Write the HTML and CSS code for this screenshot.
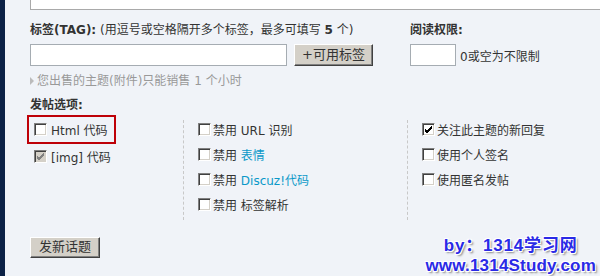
FILE: index.html
```html
<!DOCTYPE html>
<html>
<head>
<meta charset="utf-8">
<link rel="stylesheet" href="styles.css">
</head>
<body>
<div class="page">
  <div class="sidebar"></div>
  <div class="main">
    <div class="textarea"></div>
    <div class="row-top">
      <div class="tags">
        <div class="label"><b>标签(TAG):</b> (用逗号或空格隔开多个标签，最多可填写 <b>5</b> 个)</div>
        <div class="field-line">
          <span class="input input-wide"></span>
          <span class="btn btn-tags">+可用标签</span>
        </div>
      </div>
      <div class="perm">
        <div class="label"><b>阅读权限:</b></div>
        <div class="field-line">
          <span class="input input-small"></span>
          <span class="perm-note">0或空为不限制</span>
        </div>
      </div>
    </div>
    <div class="hint"><span class="tri"></span>您出售的主题(附件)只能销售 1 个小时</div>
    <div class="label opt-title"><b>发帖选项:</b></div>
    <div class="options">
      <div class="col col1">
        <div class="opt highlight"><span class="cb"></span><span class="t1">Html 代码</span></div>
        <div class="opt plain"><span class="cb cb-dis"><svg width="9" height="9" viewBox="0 0 9 9"><path d="M1 4 L3 6 L8 1 M1 5 L3 7 L8 2 M1 6 L3 8 L8 3" stroke="#808080" stroke-width="1" fill="none"/></svg></span><span class="t1">[img] 代码</span></div>
      </div>
      <div class="col col2">
        <div class="opt"><span class="cb"></span><span class="t2">禁用 URL 识别</span></div>
        <div class="opt"><span class="cb"></span><span class="t2">禁用 <a class="lnk">表情</a></span></div>
        <div class="opt"><span class="cb"></span><span class="t2">禁用 <a class="lnk">Discuz!代码</a></span></div>
        <div class="opt"><span class="cb"></span><span class="t2">禁用 标签解析</span></div>
      </div>
      <div class="col col3">
        <div class="opt"><span class="cb"><svg width="9" height="9" viewBox="0 0 9 9"><path d="M1 4 L3 6 L8 1 M1 5 L3 7 L8 2 M1 6 L3 8 L8 3" stroke="#000" stroke-width="1" fill="none"/></svg></span><span class="t2">关注此主题的新回复</span></div>
        <div class="opt"><span class="cb"></span><span class="t2">使用个人签名</span></div>
        <div class="opt"><span class="cb"></span><span class="t2">使用匿名发帖</span></div>
      </div>
    </div>
    <div class="submit-row"><span class="btn btn-submit">发新话题</span></div>
  </div>
  <div class="watermark">
    <div class="wm1">by：1314学习网</div>
    <div class="wm2">www.1314Study.com</div>
  </div>
</div>
</body>
</html>
```
FILE: styles.css
```css
html, body {
  margin: 0;
  padding: 0;
  width: 600px;
  height: 276px;
  overflow: hidden;
  background: #f0f3f8;
}
body {
  font-family: "DejaVu Sans", "Noto Sans CJK SC", sans-serif;
  font-size: 12px;
  color: #333;
}
.page {
  position: relative;
  display: flex;
  width: 600px;
  height: 276px;
}
.sidebar {
  width: 5px;
  background: #0c2146;
  flex: none;
}
.main {
  flex: 1;
  padding-left: 25px;
  display: flex;
  flex-direction: column;
  min-width: 0;
}
.textarea {
  height: 9px;
  background: #fff;
  border: 1px solid #a9a9a9;
  border-top: none;
  margin-right: -20px;
}
.row-top {
  display: flex;
  padding-top: 11px;
}
.tags {
  width: 380px;
}
.label {
  line-height: 18px;
  height: 18px;
  white-space: nowrap;
}
.label b {
  font-weight: bold;
}
.field-line {
  display: flex;
  align-items: center;
  margin-top: 5px;
  height: 22px;
}
.input {
  display: block;
  height: 20px;
  background: #fff;
  border: 1px solid #a5acb2;
  box-sizing: content-box;
}
.input-wide {
  width: 255px;
}
.input-small {
  width: 44px;
}
.btn {
  display: block;
  background: #d4d0c8;
  border: 1px solid;
  border-color: #fff #404040 #404040 #fff;
  box-shadow: inset -1px -1px 0 #808080;
  color: #333;
  text-align: center;
  box-sizing: border-box;
}
.btn-tags {
  margin-left: 7px;
  width: 79px;
  height: 22px;
  line-height: 19px;
  font-size: 13px;
}
.perm-note {
  margin-left: 4px;
}
.hint {
  margin-top: 6px;
  line-height: 18px;
  height: 18px;
  color: #999;
  display: flex;
  align-items: center;
}
.tri {
  width: 0;
  height: 0;
  border-left: 4px solid #bbb;
  border-top: 4px solid transparent;
  border-bottom: 4px solid transparent;
  margin-right: 3px;
}
.opt-title {
  margin-top: 6px;
}
.options {
  display: flex;
  margin-top: 1px;
  margin-left: -3px;
}
.col {
  display: flex;
  flex-direction: column;
}
.col1 {
  width: 156px;
}
.col2 {
  width: 209px;
  border-left: 1px dashed #c8c8c8;
  margin-top: 5px;
  padding-left: 14px;
  height: 100px;
}
.col2 .opt:first-child,
.col3 .opt:first-child {
  margin-top: -3px;
}
.col3 {
  border-left: 1px dashed #c8c8c8;
  margin-top: 5px;
  padding-left: 14px;
  height: 100px;
}
.opt {
  display: flex;
  align-items: center;
  height: 25px;
  white-space: nowrap;
}
.highlight {
  border: 2px solid #be0008;
  width: 80px;
  padding-left: 5px;
  height: 25px;
}
.plain {
  padding-left: 7px;
}
.cb {
  width: 13px;
  height: 13px;
  box-sizing: border-box;
  background: #fff;
  border: 1px solid;
  border-color: #808080 #fff #fff #808080;
  box-shadow: inset 1px 1px 0 #404040, inset -1px -1px 0 #d4d0c8;
  display: flex;
  align-items: center;
  justify-content: center;
  flex: none;
}
.cb svg {
  display: block;
}
.cb-dis {
  background: #d4d0c8;
}
.t1 {
  margin-left: 4px;
}
.t2 {
  margin-left: 2px;
}
.lnk {
  color: #0a98c8;
  text-decoration: none;
}
.submit-row {
  margin-top: 17px;
}
.btn-submit {
  width: 70px;
  height: 21px;
  line-height: 18px;
  font-size: 13px;
}
.watermark {
  position: absolute;
  right: 4px;
  bottom: 0;
  text-align: center;
  font-family: "Liberation Sans", Arial, "Noto Sans CJK SC", sans-serif;
  font-weight: bold;
  color: #2a2ae6;
  text-shadow: 1px 1px 0 #fff, -1px -1px 0 #fff, 1px -1px 0 #fff, -1px 1px 0 #fff, 2px 2px 2px #888;
}
.wm1 {
  font-size: 17px;
  line-height: 20px;
  letter-spacing: 0.8px;
}
.wm2 {
  font-size: 17px;
  line-height: 20px;
  letter-spacing: 0.2px;
}
```
